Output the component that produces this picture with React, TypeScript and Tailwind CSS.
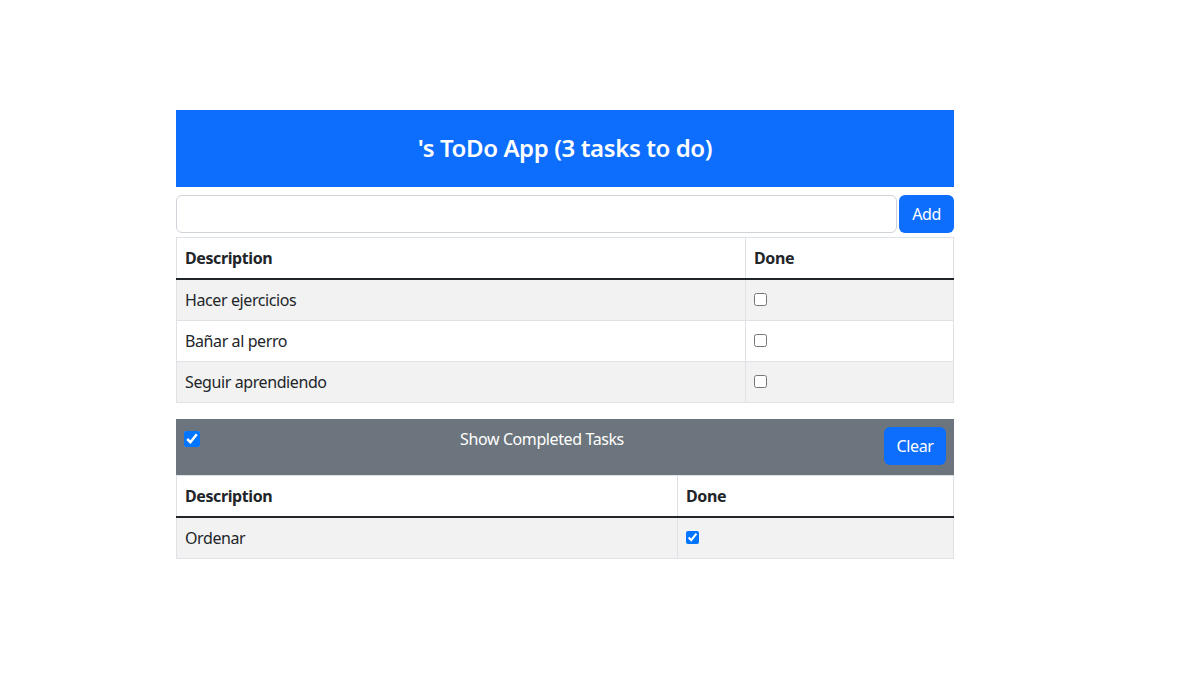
import React from "react";

function Row({ text, checked, w, striped }: { text: string; checked?: boolean; w: string; striped?: boolean }) {
  return (
    <tr className={striped ? "bg-[#f2f2f2]" : "bg-white"}>
      <td className={`${w} border border-[#dee2e6] px-2 py-2 leading-6 text-base`}>{text}</td>
      <td className="border border-[#dee2e6] px-2 py-2 leading-6">
        <input type="checkbox" defaultChecked={checked} />
      </td>
    </tr>
  );
}

export default function App() {
  return (
    <div className="min-h-[677px] bg-white text-[#212529] font-['Noto_Sans',sans-serif] tracking-[-0.025em]">
      <div className="ml-[176px] w-[778px] pt-[110px]">
        <h4 className="m-0 bg-[#0d6efd] px-4 py-6 text-center text-2xl font-semibold leading-[1.2] text-white">
          's ToDo App (3 tasks to do)
        </h4>
        <div className="mt-2 flex gap-[2px]">
          <input className="h-[38px] flex-1 rounded-md border border-[#ced4da] px-3 outline-none" />
          <button className="h-[38px] w-[55px] rounded-md bg-[#0d6efd] text-base text-white">Add</button>
        </div>
        <table className="mb-4 mt-1 w-full border-collapse border border-[#dee2e6] text-left">
          <thead>
            <tr>
              <th className="w-[569px] border border-[#dee2e6] border-b-2 border-b-[#212529] px-2 py-2 font-bold leading-6">Description</th>
              <th className="border border-[#dee2e6] border-b-2 border-b-[#212529] px-2 py-2 font-bold leading-6">Done</th>
            </tr>
          </thead>
          <tbody>
            <Row text="Hacer ejercicios" w="w-[569px]" striped />
            <Row text="Bañar al perro" w="w-[569px]" />
            <Row text="Seguir aprendiendo" w="w-[569px]" striped />
          </tbody>
        </table>
        <div className="flex h-[56px] items-start bg-[#6c757d] p-2 text-white">
          <input type="checkbox" defaultChecked className="m-0 mt-1 h-4 w-4" />
          <div className="flex-1 text-center leading-6">Show Completed Tasks</div>
          <button className="h-[38px] w-[62px] rounded-md bg-[#0d6efd] text-base text-white">Clear</button>
        </div>
        <table className="w-full border-collapse border border-[#dee2e6] text-left">
          <thead>
            <tr>
              <th className="w-[501px] border border-[#dee2e6] border-b-2 border-b-[#212529] px-2 py-2 font-bold leading-6">Description</th>
              <th className="border border-[#dee2e6] border-b-2 border-b-[#212529] px-2 py-2 font-bold leading-6">Done</th>
            </tr>
          </thead>
          <tbody>
            <Row text="Ordenar" checked w="w-[501px]" striped />
          </tbody>
        </table>
      </div>
    </div>
  );
}
